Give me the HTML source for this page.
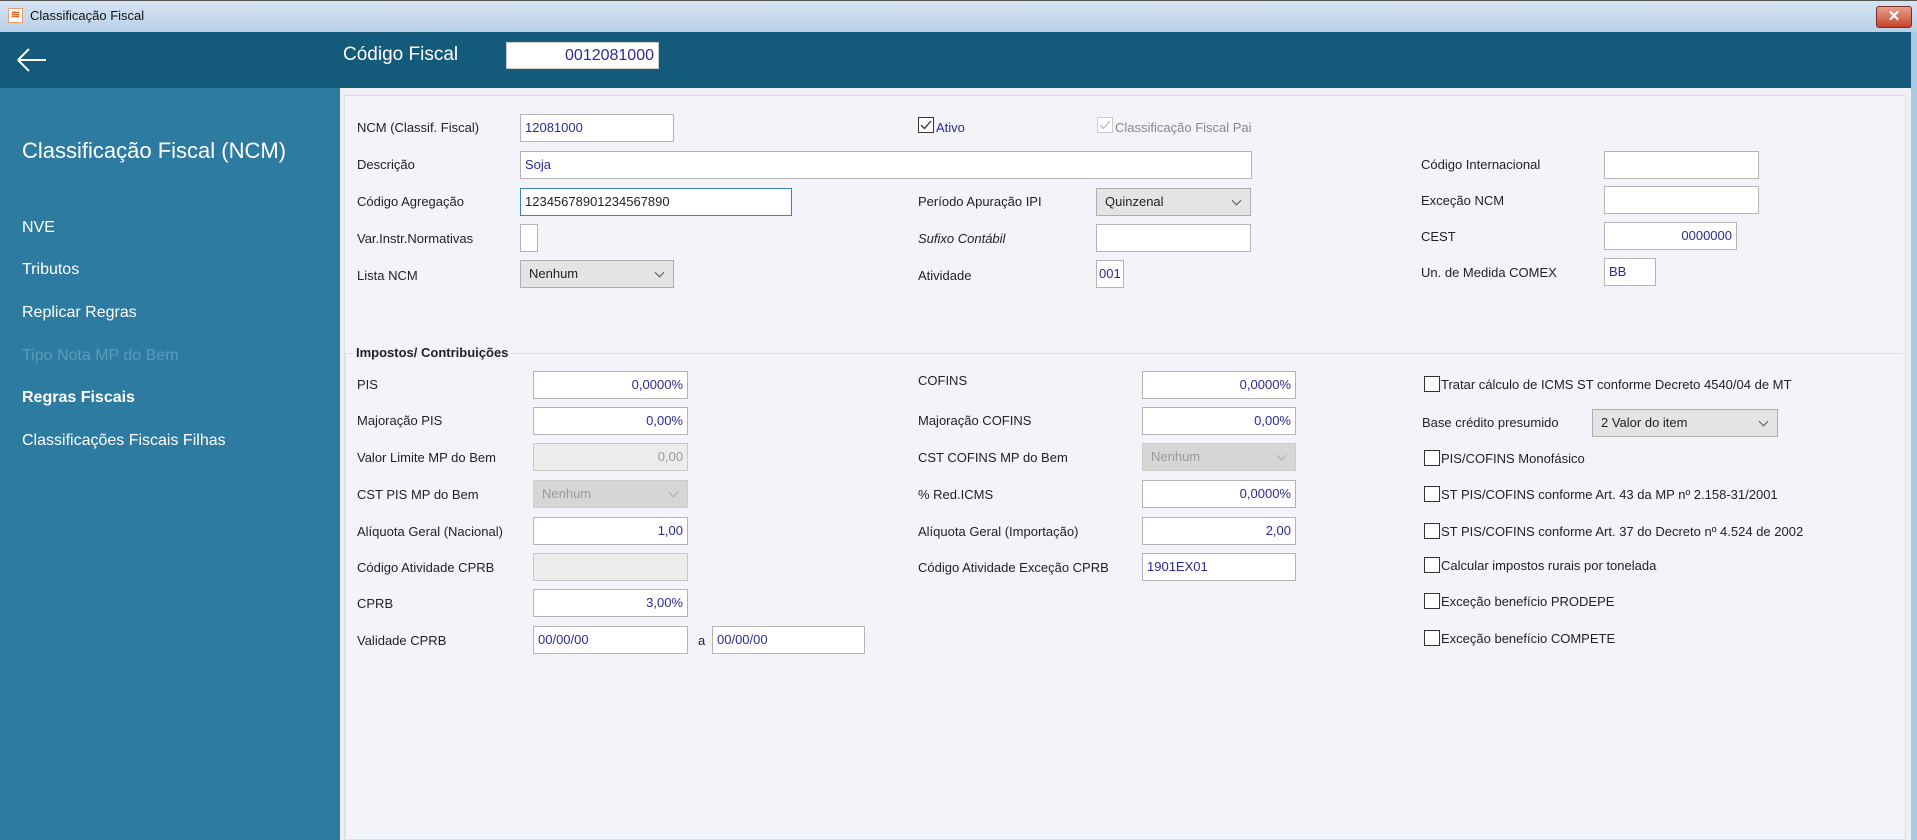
<!DOCTYPE html>
<html><head><meta charset="utf-8">
<style>
*{box-sizing:border-box;margin:0;padding:0}
body{width:1917px;height:840px;overflow:hidden;background:#eef0f6;font-family:"Liberation Sans",sans-serif;position:relative;color:#222}
.a{position:absolute}
.tb{left:0;top:0;width:1917px;height:32px;background:linear-gradient(#d6e4f3,#b9d0e8);border-top:1px solid #555}
.hd{left:0;top:32px;width:1917px;height:56px;background:#145a7a}
.sb{left:0;top:88px;width:340px;height:752px;background:#2e7ba1}
.rb{left:1911px;top:32px;width:6px;height:808px;background:#a9c8e4}
.pn{left:344px;top:95px;width:1562px;height:745px;background:#f2f4fa;border:1px solid #dcdfe6}
.l{font-size:13px;color:#222;white-space:nowrap;line-height:16px}
.i{background:#fff;border:1px solid #b4b4b4;height:28px;font-size:13px;color:#2a2a9a;padding:0 4px;line-height:26px;white-space:nowrap;overflow:hidden}
.r{text-align:right}
.d{background:#ececec;border-color:#c8c8c8;color:#999}
.s{background:#e4e4e4;border:1px solid #adadad;height:28px;font-size:13px;color:#222;padding:0 8px;line-height:26px}
.s:after{content:"";position:absolute;right:10px;top:8px;width:6px;height:6px;border-right:1px solid #555;border-bottom:1px solid #555;transform:rotate(45deg)}
.sd{background:#d6d6d6;border-color:#ccc;color:#999}
.sd:after{border-color:#aaa}
.cb{width:16px;height:16px;border:1px solid #333;background:#fff}
.m{color:#fff;font-size:16px;left:22px}
</style></head><body>
<div class="a tb"></div>
<div class="a" style="left:8px;top:8px;width:15px;height:15px;background:#fff;border:1px solid #e8a070;color:#e05a10;font-size:11px;line-height:13px;text-align:center;font-weight:bold">≋</div>
<div class="a l" style="left:30px;top:8px;font-size:13px;color:#111">Classificação Fiscal</div>
<div class="a" style="left:1876px;top:6px;width:36px;height:22px;border-radius:3px;background:linear-gradient(#e8a090,#c8442c);border:1px solid #7a3020;color:#fff;font-size:15px;font-weight:bold;text-align:center;line-height:20px">✕</div>
<div class="a hd"></div>
<svg class="a" style="left:14px;top:46px" width="36" height="28"><path d="M4 14H32M4 14L15 3M4 14L15 25" stroke="#fff" stroke-width="2" fill="none"/></svg>
<div class="a" style="left:343px;top:44px;font-size:19px;color:#fff">Código Fiscal</div>
<div class="a i r" style="left:506px;top:42px;width:153px;height:27px;font-size:16px;border:1px solid #ccc">0012081000</div>
<div class="a sb"></div>
<div class="a rb"></div>
<div class="a" style="left:22px;top:138px;font-size:22px;color:#fff">Classificação Fiscal (NCM)</div>
<div class="a m" style="top:219px">NVE</div>
<div class="a m" style="top:261px">Tributos</div>
<div class="a m" style="top:304px">Replicar Regras</div>
<div class="a m" style="top:347px;color:#5b9bbb">Tipo Nota MP do Bem</div>
<div class="a m" style="top:389px;font-weight:bold">Regras Fiscais</div>
<div class="a m" style="top:432px">Classificações Fiscais Filhas</div>
<div class="a pn"></div>

<div class="a l" style="left:357px;top:120px">NCM (Classif. Fiscal)</div>
<div class="a i" style="left:520px;top:114px;width:154px">12081000</div>
<div class="a l" style="left:357px;top:157px">Descrição</div>
<div class="a i" style="left:520px;top:151px;width:732px">Soja</div>
<div class="a l" style="left:357px;top:194px">Código Agregação</div>
<div class="a i" style="left:520px;top:188px;width:272px;border-color:#3b7fc4;color:#222">12345678901234567890</div>
<div class="a l" style="left:357px;top:231px">Var.Instr.Normativas</div>
<div class="a i" style="left:520px;top:224px;width:18px"></div>
<div class="a l" style="left:357px;top:268px">Lista NCM</div>
<div class="a s" style="left:520px;top:260px;width:154px">Nenhum</div>

<div class="a cb" style="left:918px;top:117px"></div>
<svg class="a" style="left:918px;top:117px" width="16" height="16"><path d="M3 8L6.5 11.5L13 4" stroke="#333" stroke-width="1.3" fill="none"/></svg>
<div class="a l" style="left:936px;top:120px;color:#2a2a9a">Ativo</div>
<div class="a cb" style="left:1097px;top:117px;border-color:#ccc"></div>
<svg class="a" style="left:1097px;top:117px" width="16" height="16"><path d="M3 8L6.5 11.5L13 4" stroke="#bbb" stroke-width="1.3" fill="none"/></svg>
<div class="a l" style="left:1115px;top:120px;color:#888">Classificação Fiscal Pai</div>
<div class="a l" style="left:918px;top:194px">Período Apuração IPI</div>
<div class="a s" style="left:1096px;top:188px;width:155px">Quinzenal</div>
<div class="a l" style="left:918px;top:231px;font-style:italic">Sufixo Contábil</div>
<div class="a i" style="left:1096px;top:224px;width:155px"></div>
<div class="a l" style="left:918px;top:268px">Atividade</div>
<div class="a i" style="left:1096px;top:260px;width:28px;padding:0 2px">001</div>

<div class="a l" style="left:1421px;top:157px">Código Internacional</div>
<div class="a i" style="left:1604px;top:151px;width:155px"></div>
<div class="a l" style="left:1421px;top:193px">Exceção NCM</div>
<div class="a i" style="left:1604px;top:186px;width:155px"></div>
<div class="a l" style="left:1421px;top:229px">CEST</div>
<div class="a i r" style="left:1604px;top:222px;width:133px">0000000</div>
<div class="a l" style="left:1421px;top:265px">Un. de Medida COMEX</div>
<div class="a i" style="left:1604px;top:258px;width:52px">BB</div>

<div class="a" style="left:345px;top:353px;width:1558px;height:1px;background:#dcdfe6"></div>
<div class="a" style="left:345px;top:353px;width:1px;height:487px;background:#dcdfe6"></div>
<div class="a l" style="left:353px;top:345px;font-weight:bold;background:#f2f4fa;padding:0 3px">Impostos/ Contribuições</div>

<div class="a l" style="left:357px;top:377px">PIS</div>
<div class="a i r" style="left:533px;top:371px;width:155px">0,0000%</div>
<div class="a l" style="left:357px;top:413px">Majoração PIS</div>
<div class="a i r" style="left:533px;top:407px;width:155px">0,00%</div>
<div class="a l" style="left:357px;top:450px">Valor Limite MP do Bem</div>
<div class="a i r d" style="left:533px;top:443px;width:155px">0,00</div>
<div class="a l" style="left:357px;top:487px">CST PIS MP do Bem</div>
<div class="a s sd" style="left:533px;top:480px;width:155px">Nenhum</div>
<div class="a l" style="left:357px;top:524px">Alíquota Geral (Nacional)</div>
<div class="a i r" style="left:533px;top:517px;width:155px">1,00</div>
<div class="a l" style="left:357px;top:560px">Código Atividade CPRB</div>
<div class="a i d" style="left:533px;top:553px;width:155px"></div>
<div class="a l" style="left:357px;top:596px">CPRB</div>
<div class="a i r" style="left:533px;top:589px;width:155px">3,00%</div>
<div class="a l" style="left:357px;top:633px">Validade CPRB</div>
<div class="a i" style="left:533px;top:626px;width:155px">00/00/00</div>
<div class="a l" style="left:698px;top:633px">a</div>
<div class="a i" style="left:712px;top:626px;width:153px">00/00/00</div>

<div class="a l" style="left:918px;top:373px">COFINS</div>
<div class="a i r" style="left:1142px;top:371px;width:154px">0,0000%</div>
<div class="a l" style="left:918px;top:413px">Majoração COFINS</div>
<div class="a i r" style="left:1142px;top:407px;width:154px">0,00%</div>
<div class="a l" style="left:918px;top:450px">CST COFINS MP do Bem</div>
<div class="a s sd" style="left:1142px;top:443px;width:154px">Nenhum</div>
<div class="a l" style="left:918px;top:487px">% Red.ICMS</div>
<div class="a i r" style="left:1142px;top:480px;width:154px">0,0000%</div>
<div class="a l" style="left:918px;top:524px">Alíquota Geral (Importação)</div>
<div class="a i r" style="left:1142px;top:517px;width:154px">2,00</div>
<div class="a l" style="left:918px;top:560px">Código Atividade Exceção CPRB</div>
<div class="a i" style="left:1142px;top:553px;width:154px">1901EX01</div>

<div class="a cb" style="left:1424px;top:376px"></div><div class="a l" style="left:1441px;top:377px">Tratar cálculo de ICMS ST conforme Decreto 4540/04 de MT</div>
<div class="a l" style="left:1422px;top:415px">Base crédito presumido</div>
<div class="a s" style="left:1592px;top:409px;width:186px">2 Valor do item</div>
<div class="a cb" style="left:1424px;top:450px"></div><div class="a l" style="left:1441px;top:451px">PIS/COFINS Monofásico</div>
<div class="a cb" style="left:1424px;top:486px"></div><div class="a l" style="left:1441px;top:487px">ST PIS/COFINS conforme Art. 43 da MP nº 2.158-31/2001</div>
<div class="a cb" style="left:1424px;top:523px"></div><div class="a l" style="left:1441px;top:524px">ST PIS/COFINS conforme Art. 37 do Decreto nº 4.524 de 2002</div>
<div class="a cb" style="left:1424px;top:557px"></div><div class="a l" style="left:1441px;top:558px">Calcular impostos rurais por tonelada</div>
<div class="a cb" style="left:1424px;top:593px"></div><div class="a l" style="left:1441px;top:594px">Exceção benefício PRODEPE</div>
<div class="a cb" style="left:1424px;top:630px"></div><div class="a l" style="left:1441px;top:631px">Exceção benefício COMPETE</div>
</body></html>
